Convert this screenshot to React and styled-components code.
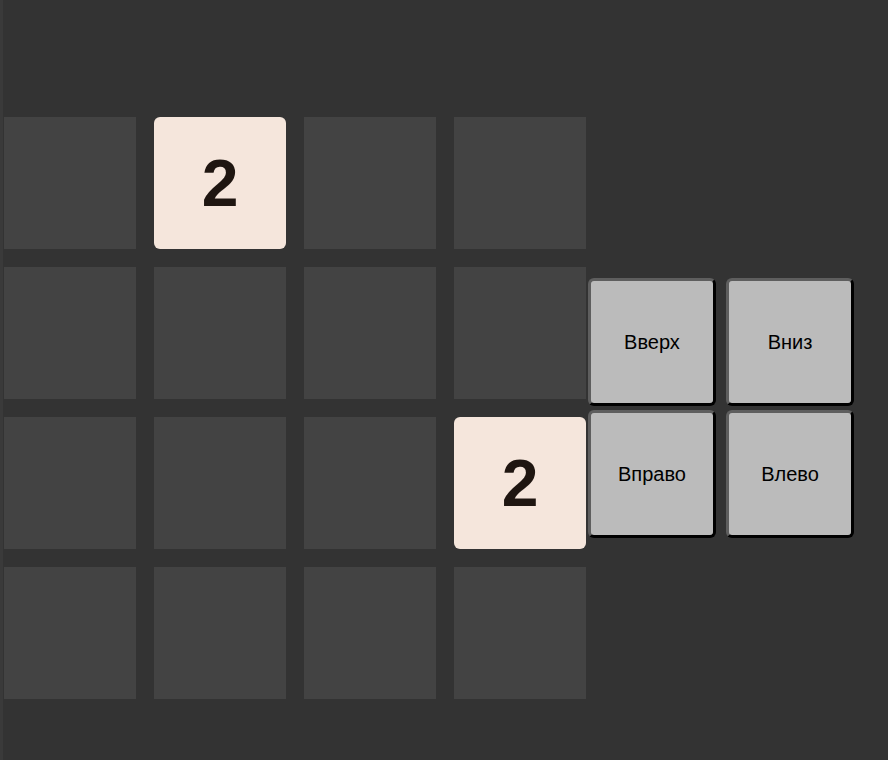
import React from "react";
import styled, { createGlobalStyle } from "styled-components";

const Global = createGlobalStyle`
  html, body {
    margin: 0;
    padding: 0;
    background: #333333;
  }
`;

const Page = styled.div`
  box-sizing: border-box;
  height: 760px;
  border-left: 3px solid #3a3a3a;
  padding: 117px 0 0 1px;
  display: flex;
  align-items: flex-start;
`;

const Layout = styled.div`
  display: flex;
  align-items: center;
`;

const Board = styled.div`
  display: grid;
  grid-template-columns: repeat(4, 132px);
  grid-auto-rows: 132px;
  gap: 18px;
`;

const Tile = styled.div`
  display: flex;
  align-items: center;
  justify-content: center;
  background: ${(p) => (p.value ? "#f5e6dc" : "#434343")};
  border-radius: ${(p) => (p.value ? "6px" : "0")};
  color: #1f1611;
  font-family: "Liberation Sans", Arial, sans-serif;
  font-weight: 700;
  font-size: 66px;
`;

const Controls = styled.div`
  display: grid;
  grid-template-columns: repeat(2, 128px);
  grid-auto-rows: 128px;
  column-gap: 10px;
  row-gap: 4px;
  margin-left: 2px;
`;

const MoveButton = styled.button`
  box-sizing: border-box;
  background: #bbbbbb;
  border: 3px solid;
  border-color: #5e5e5e #000000 #000000 #5e5e5e;
  border-radius: 6px;
  font-family: "Liberation Sans", Arial, sans-serif;
  font-size: 20px;
  color: #000;
  padding: 0;
  cursor: pointer;
`;

const cells = [
  0, 2, 0, 0,
  0, 0, 0, 0,
  0, 0, 0, 2,
  0, 0, 0, 0,
];

export default function App() {
  return (
    <>
      <Global />
      <Page>
        <Layout>
          <Board>
            {cells.map((v, i) => (
              <Tile key={i} value={v}>
                {v || ""}
              </Tile>
            ))}
          </Board>
          <Controls>
            <MoveButton>Вверх</MoveButton>
            <MoveButton>Вниз</MoveButton>
            <MoveButton>Вправо</MoveButton>
            <MoveButton>Влево</MoveButton>
          </Controls>
        </Layout>
      </Page>
    </>
  );
}
